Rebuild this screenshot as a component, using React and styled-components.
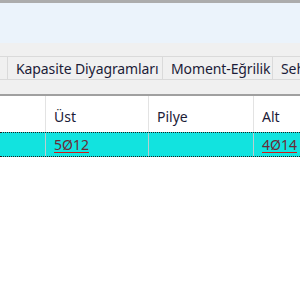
import React from 'react'
import styled, { createGlobalStyle } from 'styled-components'

const GlobalStyle = createGlobalStyle`
  html, body {
    margin: 0;
    padding: 0;
    background: #ffffff;
  }
  body {
    font-family: "Noto Sans", "Open Sans", sans-serif;
    color: #1b1b2a;
  }
`

const tabs = [
  { label: 'Kapasite Diyagramları', width: 155 },
  { label: 'Moment-Eğrilik', width: 110 },
  { label: 'Sehim', width: 60 }
]

const columns = [
  { key: 'no', title: '', width: 46 },
  { key: 'ust', title: 'Üst', width: 103 },
  { key: 'pilye', title: 'Pilye', width: 105 },
  { key: 'alt', title: 'Alt', width: 60 }
]

const row = { no: '', ust: '5Ø12', pilye: '', alt: '4Ø14' }

export default function App() {
  return (
    <>
      <GlobalStyle />
      <WindowStyled>
        <TitleStrip>
          <span>Tümer</span>
          <span>Görünüm</span>
        </TitleStrip>
        <RibbonStyled />
        <BandStyled />
        <TabStrip>
          <TabStub />
          {tabs.map((t) => (
            <Tab key={t.label} width={t.width}>
              {t.label}
            </Tab>
          ))}
        </TabStrip>
        <PanelGap />
        <DividerStyled />
        <GridStyled>
          <HeaderRow>
            {columns.map((c) => (
              <HeaderCell key={c.key} width={c.width}>
                {c.title}
              </HeaderCell>
            ))}
          </HeaderRow>
          <DataRow>
            {columns.map((c) => (
              <DataCell key={c.key} width={c.width}>
                {row[c.key] && <Rebar>{row[c.key]}</Rebar>}
              </DataCell>
            ))}
          </DataRow>
        </GridStyled>
      </WindowStyled>
    </>
  )
}

const WindowStyled = styled.div`
  width: 300px;
  height: 300px;
  overflow: hidden;
  display: flex;
  flex-direction: column;
  background: #ffffff;
`

const TitleStrip = styled.div`
  height: 3px;
  flex: none;
  overflow: hidden;
  background: #acacac;
  display: flex;
  gap: 14px;
  padding-left: 80px;
  span {
    display: block;
    font-size: 14px;
    line-height: 14px;
    margin-top: -12px;
    color: #2a2a3a;
  }
`

const RibbonStyled = styled.div`
  height: 40px;
  flex: none;
  background: #ebf3fb;
`

const BandStyled = styled.div`
  height: 13px;
  flex: none;
  background: #f0f0f0;
`

const TabStrip = styled.div`
  height: 24px;
  flex: none;
  display: flex;
  background: #f0f0f0;
  overflow: hidden;
`

const TabStub = styled.div`
  width: 7px;
  flex: none;
  border-top: 1px solid #dadada;
  border-bottom: 1px solid #dadada;
  border-right: 1px solid #dadada;
`

const Tab = styled.div`
  width: ${(p) => p.width}px;
  flex: none;
  box-sizing: border-box;
  border: 1px solid #dadada;
  border-left: none;
  padding: 0 8px;
  display: flex;
  align-items: center;
  font-size: 14px;
  letter-spacing: -0.1px;
  white-space: nowrap;
  overflow: hidden;
  background: #f0f0f0;
  color: #1c1c38;
`

const PanelGap = styled.div`
  height: 14px;
  flex: none;
  background: #f0f0f0;
`

const DividerStyled = styled.div`
  height: 2px;
  flex: none;
  background: #a0a0a0;
`

const GridStyled = styled.div`
  flex: 1;
  background: #ffffff;
`

const HeaderRow = styled.div`
  display: flex;
  height: 36px;
`

const HeaderCell = styled.div`
  width: ${(p) => p.width}px;
  flex: none;
  box-sizing: border-box;
  border-right: 1px solid #e3e3e3;
  padding: 4px 0 0 8px;
  display: flex;
  align-items: center;
  font-size: 14px;
  color: #1c1c38;
  &:last-child {
    border-right: none;
    flex: 1;
  }
`

const DataRow = styled.div`
  display: flex;
  height: 25px;
  box-sizing: border-box;
  background: #12e3df;
  border-top: 1px dotted #202020;
  border-bottom: 1px dotted #202020;
`

const DataCell = styled.div`
  width: ${(p) => p.width}px;
  flex: none;
  box-sizing: border-box;
  border-right: 1px solid #b9cfcf;
  padding-left: 8px;
  display: flex;
  align-items: center;
  font-size: 14px;
  &:last-child {
    border-right: none;
    flex: 1;
  }
`

const Rebar = styled.span`
  color: #6a2a36;
  text-decoration: underline;
  text-decoration-color: #d01818;
  text-underline-offset: 2px;
`
